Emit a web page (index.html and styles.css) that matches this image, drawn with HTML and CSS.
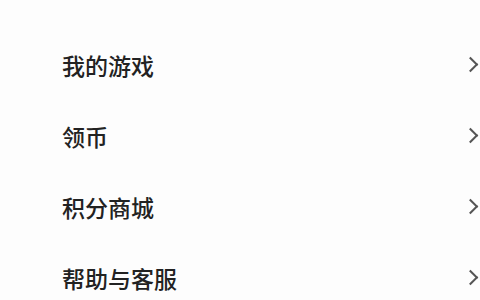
FILE: index.html
```html
<!DOCTYPE html>
<html lang="zh-CN">
<head>
    <meta charset="UTF-8">
    <title>我的</title>
    <link rel="stylesheet" href="styles.css">
</head>
<body>
    <ul class="menu">
        <li class="menu-item"><span>我的游戏</span><i class="arrow"></i></li>
        <li class="menu-item"><span>领币</span><i class="arrow"></i></li>
        <li class="menu-item"><span>积分商城</span><i class="arrow"></i></li>
        <li class="menu-item"><span>帮助与客服</span><i class="arrow"></i></li>
    </ul>
</body>
</html>
```

FILE: styles.css
```css
html,
body {
    margin: 0;
    height: 100%;
    background-color: #fdfdfd;
    font-family: "Noto Sans CJK SC", sans-serif;
    color: #222;
    overflow: hidden;
}

.menu {
    list-style: none;
    margin: 0;
    padding: 29px 0 0 62px;
}

.menu-item {
    display: flex;
    align-items: center;
    justify-content: space-between;
    height: 71px;
    font-size: 23px;
    font-weight: 500;
}

.arrow {
    width: 9px;
    height: 9px;
    border-top: 2px solid #555;
    border-right: 2px solid #555;
    transform: rotate(45deg);
    margin-right: 4px;
}
```
